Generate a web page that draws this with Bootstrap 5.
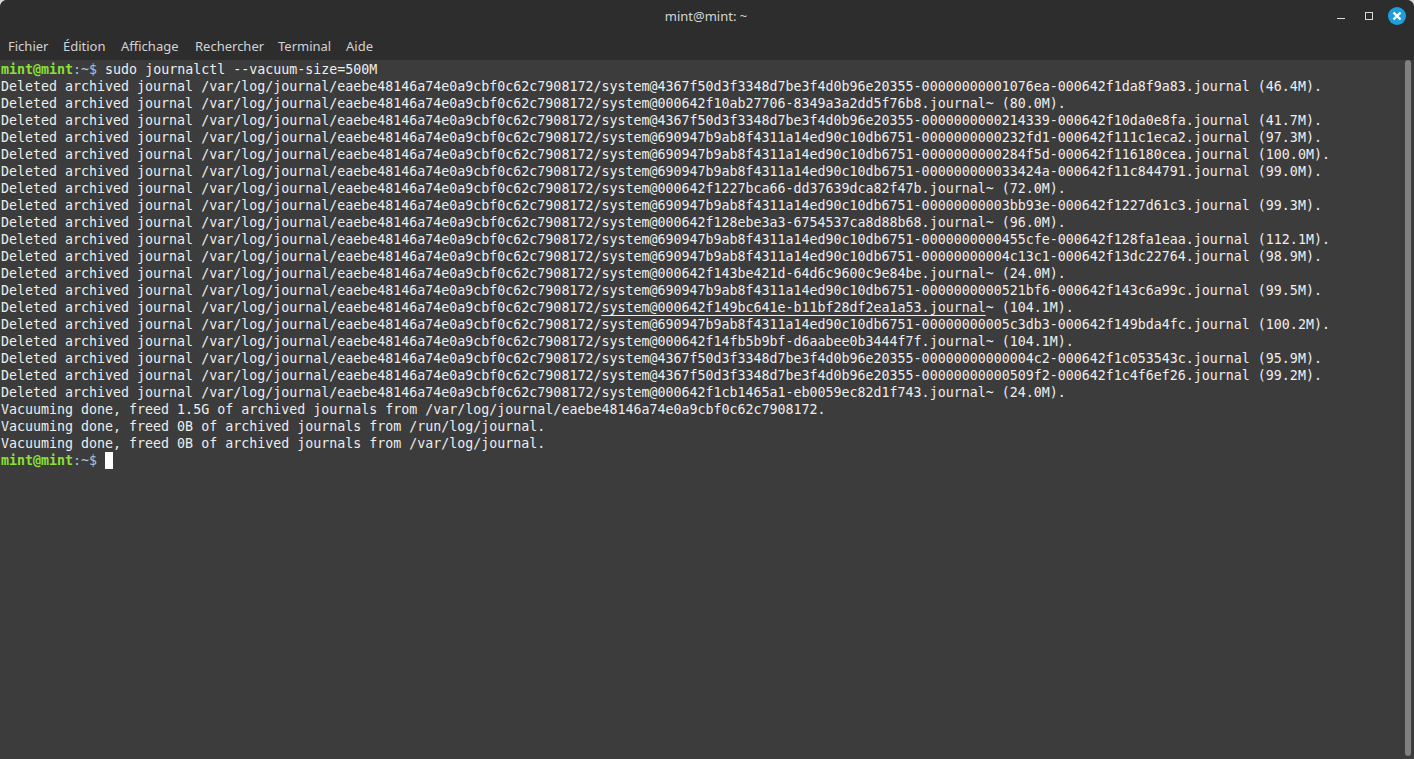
<!DOCTYPE html>
<html lang="fr">
<head>
<meta charset="utf-8">
<title>mint@mint: ~</title>
<link href="https://cdn.jsdelivr.net/npm/bootstrap@5.3.0/dist/css/bootstrap.min.css" rel="stylesheet">
<style>
html, body { height: 100%; margin: 0; background: #d8d8d8; overflow: hidden; }
.win-frame { height: 759px; width: 1414px; background: #3c3c3c; border-radius: 7px 7px 0 0; overflow: hidden; }
.win-title { height: 32px; background: #2d2d2d; color: #d6d6d6; font: 13px/32px "Noto Sans", sans-serif; position: relative; }
.win-name { text-align: center; width: 100%; padding-right: 2px; }
.win-ctl { position: absolute; top: 0; right: 0; height: 32px; }
.win-ctl svg { display: block; }
.menu-strip { height: 28px; background: #2d2d2d; color: #d2d2d2; font: 13px/29px "Noto Sans", sans-serif; padding-left: 8px; display: grid; grid-template-columns: 55px 58px 74px 83px 68px auto; }
.term-area { height: 699px; }
.term-text { flex: 1 1 auto; margin: 0; overflow: hidden; background: #3c3c3c; color: #eeeeec; font: 13.3px/17px "DejaVu Sans Mono", monospace; padding: 1px 0 0 1px; }
.prompt-g { color: #8ae234; font-weight: 700; }
.prompt-p { color: #a9c4dc; font-weight: 400; }
.hover-link { text-decoration: underline; text-underline-offset: 3px; }
.term-cursor { display: inline-block; width: 8px; height: 17px; background: #fff; vertical-align: top; }
.scroll-rail { width: 14px; flex: 0 0 14px; padding: 0 3px 3px 5px; }
.scroll-thumb { height: 100%; width: 6px; background: #808080; border-radius: 3px; }
</style>
</head>
<body>
<div class="win-frame d-flex flex-column">
  <div class="win-title">
    <div class="win-name">mint@mint: ~</div>
    <div class="win-ctl">
      <svg width="114" height="32" viewBox="0 0 114 32" xmlns="http://www.w3.org/2000/svg">
        <rect x="37" y="18" width="8" height="1" fill="#d8d8d8"/>
        <rect x="65.5" y="12.5" width="7" height="7" fill="none" stroke="#d8d8d8" stroke-width="1"/>
        <circle cx="97" cy="16" r="9" fill="#1f9ede"/>
        <path d="M93.5 12.5l7 7M100.5 12.5l-7 7" stroke="#fff" stroke-width="2.4" fill="none"/>
      </svg>
    </div>
  </div>
  <div class="menu-strip">
    <span>Fichier</span><span>Édition</span><span>Affichage</span><span>Rechercher</span><span>Terminal</span><span>Aide</span>
  </div>
  <div class="term-area d-flex">
<pre class="term-text"><span class="prompt-g">mint@mint</span><span class="prompt-p">:~$</span> sudo journalctl --vacuum-size=500M
Deleted archived journal /var/log/journal/eaebe48146a74e0a9cbf0c62c7908172/system@4367f50d3f3348d7be3f4d0b96e20355-00000000001076ea-000642f1da8f9a83.journal (46.4M).
Deleted archived journal /var/log/journal/eaebe48146a74e0a9cbf0c62c7908172/system@000642f10ab27706-8349a3a2dd5f76b8.journal~ (80.0M).
Deleted archived journal /var/log/journal/eaebe48146a74e0a9cbf0c62c7908172/system@4367f50d3f3348d7be3f4d0b96e20355-0000000000214339-000642f10da0e8fa.journal (41.7M).
Deleted archived journal /var/log/journal/eaebe48146a74e0a9cbf0c62c7908172/system@690947b9ab8f4311a14ed90c10db6751-0000000000232fd1-000642f111c1eca2.journal (97.3M).
Deleted archived journal /var/log/journal/eaebe48146a74e0a9cbf0c62c7908172/system@690947b9ab8f4311a14ed90c10db6751-0000000000284f5d-000642f116180cea.journal (100.0M).
Deleted archived journal /var/log/journal/eaebe48146a74e0a9cbf0c62c7908172/system@690947b9ab8f4311a14ed90c10db6751-000000000033424a-000642f11c844791.journal (99.0M).
Deleted archived journal /var/log/journal/eaebe48146a74e0a9cbf0c62c7908172/system@000642f1227bca66-dd37639dca82f47b.journal~ (72.0M).
Deleted archived journal /var/log/journal/eaebe48146a74e0a9cbf0c62c7908172/system@690947b9ab8f4311a14ed90c10db6751-00000000003bb93e-000642f1227d61c3.journal (99.3M).
Deleted archived journal /var/log/journal/eaebe48146a74e0a9cbf0c62c7908172/system@000642f128ebe3a3-6754537ca8d88b68.journal~ (96.0M).
Deleted archived journal /var/log/journal/eaebe48146a74e0a9cbf0c62c7908172/system@690947b9ab8f4311a14ed90c10db6751-0000000000455cfe-000642f128fa1eaa.journal (112.1M).
Deleted archived journal /var/log/journal/eaebe48146a74e0a9cbf0c62c7908172/system@690947b9ab8f4311a14ed90c10db6751-00000000004c13c1-000642f13dc22764.journal (98.9M).
Deleted archived journal /var/log/journal/eaebe48146a74e0a9cbf0c62c7908172/system@000642f143be421d-64d6c9600c9e84be.journal~ (24.0M).
Deleted archived journal /var/log/journal/eaebe48146a74e0a9cbf0c62c7908172/system@690947b9ab8f4311a14ed90c10db6751-0000000000521bf6-000642f143c6a99c.journal (99.5M).
Deleted archived journal /var/log/journal/eaebe48146a74e0a9cbf0c62c7908172/<span class="hover-link">system@000642f149bc641e-b11bf28df2ea1a53.journal</span>~ (104.1M).
Deleted archived journal /var/log/journal/eaebe48146a74e0a9cbf0c62c7908172/system@690947b9ab8f4311a14ed90c10db6751-00000000005c3db3-000642f149bda4fc.journal (100.2M).
Deleted archived journal /var/log/journal/eaebe48146a74e0a9cbf0c62c7908172/system@000642f14fb5b9bf-d6aabee0b3444f7f.journal~ (104.1M).
Deleted archived journal /var/log/journal/eaebe48146a74e0a9cbf0c62c7908172/system@4367f50d3f3348d7be3f4d0b96e20355-00000000000004c2-000642f1c053543c.journal (95.9M).
Deleted archived journal /var/log/journal/eaebe48146a74e0a9cbf0c62c7908172/system@4367f50d3f3348d7be3f4d0b96e20355-00000000000509f2-000642f1c4f6ef26.journal (99.2M).
Deleted archived journal /var/log/journal/eaebe48146a74e0a9cbf0c62c7908172/system@000642f1cb1465a1-eb0059ec82d1f743.journal~ (24.0M).
Vacuuming done, freed 1.5G of archived journals from /var/log/journal/eaebe48146a74e0a9cbf0c62c7908172.
Vacuuming done, freed 0B of archived journals from /run/log/journal.
Vacuuming done, freed 0B of archived journals from /var/log/journal.
<span class="prompt-g">mint@mint</span><span class="prompt-p">:~$</span> <span class="term-cursor"></span></pre>
    <div class="scroll-rail"><div class="scroll-thumb"></div></div>
  </div>
</div>
</body>
</html>
